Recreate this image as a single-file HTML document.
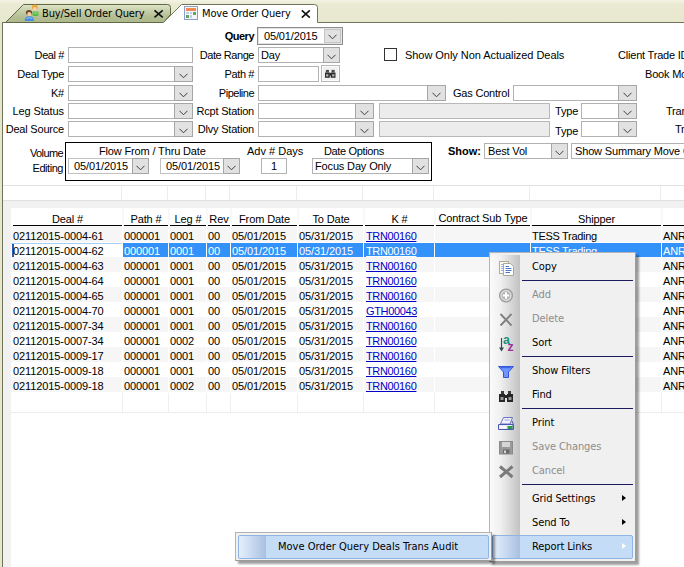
<!DOCTYPE html>
<html>
<head>
<meta charset="utf-8">
<title>Move Order Query</title>
<style>
html,body{margin:0;padding:0;}
body{width:684px;height:567px;overflow:hidden;position:relative;background:#e8e8cf;font-family:"Liberation Sans",Arial,sans-serif;font-size:11px;color:#000;}
.abs{position:absolute;}
#tabbar{position:absolute;left:0;top:0;width:684px;height:23px;background:linear-gradient(#f3f3e6 0,#eaead3 4px,#e8e8cf 100%);}
#panel{position:absolute;left:2px;top:22px;width:690px;height:560px;background:#fff;border:1px solid #70745a;box-sizing:border-box;}
#leftedge{position:absolute;left:0;top:22px;width:2px;height:545px;background:#e6e6cc;}
.lbl{position:absolute;white-space:nowrap;height:14px;line-height:14px;font-size:11px;letter-spacing:-0.2px;}
.r{text-align:right;}
.inp{position:absolute;box-sizing:border-box;border:1px solid #b2b2b2;background:#fff;height:16px;font-size:11px;line-height:14px;padding-left:3px;white-space:nowrap;letter-spacing:-0.15px;}
.dis{background:#ececec;border-color:#b8b8b8;}
.cb{position:absolute;right:-1px;top:-1px;bottom:-1px;width:19px;background:#e1e1e1;border:1px solid #a6a6a6;box-sizing:border-box;}
.cb.n{width:17px;}
.cb svg{position:absolute;left:4px;bottom:2px;}
.cb.n svg{left:3px;}
.tabtxt{position:absolute;top:7px;font-family:"DejaVu Sans Condensed","DejaVu Sans","Liberation Sans",sans-serif;font-size:11px;line-height:14px;white-space:nowrap;letter-spacing:-0.1px;}
.hc{position:absolute;top:208px;height:17px;line-height:22px;text-align:center;border-bottom:1px solid #000;font-size:11px;white-space:nowrap;background:#fff;box-sizing:content-box;box-shadow:0 1px 0 #8a8a8a;letter-spacing:-0.1px;}
.row{position:absolute;left:12px;width:680px;height:15px;}
.alt{box-shadow:-1px 0 0 #f6f6f6;}
.row span{position:absolute;top:0;height:15px;line-height:18px;font-size:11px;white-space:nowrap;letter-spacing:-0.1px;}
.alt{background:#f6f6f6;}
.sel{background:#3392fa;color:#fff;height:14px !important;margin-top:1px;}
.sel span{top:-1px;}
.sel i{position:absolute;display:block;}
.lnk{color:#0000c8;text-decoration:underline;letter-spacing:-0.35px !important;}
.vl{position:absolute;width:1px;background:#e6e6e6;}
.hl{position:absolute;height:1px;background:#e2e2e2;left:11px;width:680px;}
#menu{position:absolute;left:489px;top:252px;width:147px;height:310px;background:#f0f0f0;border:1px solid #b4b4b4;border-right-color:#9c9c9c;border-bottom-color:#9c9c9c;box-sizing:border-box;box-shadow:3px 3px 2px rgba(0,0,0,0.38);}
#menu .gut{position:absolute;left:0;top:2px;width:30px;bottom:2px;background:linear-gradient(90deg,#fbfbfb,#f0f0f0 35%,#c2c2c2);}
.mi{position:absolute;left:42px;height:16px;line-height:16px;font-size:11px;white-space:nowrap;font-family:"DejaVu Sans Condensed","DejaVu Sans","Liberation Sans",sans-serif;letter-spacing:-0.1px;}
.mi.d{color:#8d8d8d;}
.sep{position:absolute;left:32px;width:111px;height:1px;background:#1b1b5c;}
.arr{position:absolute;left:132px;width:0;height:0;border-left:4px solid #000;border-top:3.500px solid transparent;border-bottom:3.500px solid transparent;margin-top:1px;}
#sub{position:absolute;left:235px;top:532px;width:257px;height:29px;background:#f0f0f0;border:1px solid #b4b4b4;border-right-color:#9c9c9c;border-bottom-color:#9c9c9c;box-sizing:border-box;box-shadow:3px 3px 2px rgba(0,0,0,0.38);}
.ic{position:absolute;}
</style>
</head>
<body>
<div id="tabbar"></div>
<div id="leftedge"></div>
<div id="panel"></div>
<svg class="abs" style="left:0;top:0" width="684" height="24" viewBox="0 0 684 24">
  <defs>
    <linearGradient id="tg" x1="0" y1="0" x2="0" y2="1">
      <stop offset="0" stop-color="#e0e5ca"/>
      <stop offset="0.35" stop-color="#c6cfaa"/>
      <stop offset="0.7" stop-color="#b3be93"/>
      <stop offset="1" stop-color="#adb88c"/>
    </linearGradient>
  </defs>
  <path d="M5.500 22.500 L23.500 4.500 L167.500 4.500 Q170.500 4.500 170.500 7.500 L170.500 14.500 L163.500 22.500 Z" fill="url(#tg)" stroke="#626846" stroke-width="1"/>
  <path d="M163.500 22.500 L181.500 4.500 L314.500 4.500 Q317.500 4.500 317.500 7.500 L317.500 22.500 L684 22.500 L684 24 L163.500 24 Z" fill="#fff" stroke="none"/>
  <path d="M163.500 22.500 L181.500 4.500 L314.500 4.500 Q317.500 4.500 317.500 7.500 L317.500 22.500 L684 22.500" fill="none" stroke="#70745a" stroke-width="1"/>
  <g>
    <ellipse cx="34.800" cy="7.200" rx="3" ry="2.700" fill="#f0a73a"/>
    <circle cx="34.800" cy="9" r="2" fill="#f9cfae"/>
    <rect x="32.500" y="11.500" width="6" height="4.500" rx="1.200" fill="#56bb45"/>
    <rect x="33.500" y="12.500" width="4" height="1.200" fill="#8fdc7c"/>
    <ellipse cx="29" cy="12.500" rx="3.100" ry="2.600" fill="#6e4424"/>
    <circle cx="29.300" cy="14" r="2.100" fill="#f8cba6"/>
    <path d="M24.800 21 Q24.500 16.200 29.300 16.200 Q34.200 16.200 34 21 Z" fill="#3f8de6"/>
    <path d="M26.500 18.500 Q29.300 17 32.300 18.500" stroke="#9cc6f6" stroke-width="1" fill="none"/>
  </g>
  <g>
    <rect x="184.500" y="6.500" width="13" height="13" fill="#f4f6fb" stroke="#8aa0c8"/>
    <rect x="186" y="8" width="10" height="3" fill="#f08a50"/>
    <rect x="186" y="12" width="3" height="2" fill="#bcd0ea"/>
    <rect x="190" y="12" width="2" height="2" fill="#bcd0ea"/>
    <rect x="193" y="12" width="3" height="3" fill="#52b052"/>
    <rect x="186" y="15" width="3" height="3" fill="#6aa06a"/>
    <rect x="190" y="15" width="2" height="3" fill="#bcd0ea"/>
  </g>
  <path d="M154.500 10.300 L162.700 17.400 M162.700 10.300 L154.500 17.400" stroke="#111" stroke-width="1.600" fill="none"/>
  <path d="M301.800 10.300 L309.800 17.700 M309.800 10.300 L301.800 17.700" stroke="#111" stroke-width="1.600" fill="none"/>
</svg>
<div class="tabtxt" style="left:42px;">Buy/Sell Order Query</div>
<div class="tabtxt" style="left:202px;letter-spacing:-0.15px;">Move Order Query</div>
<div class="lbl r" style="left:194px;width:60px;top:29px;font-weight:bold;letter-spacing:-0.5px;">Query</div>
<div class="lbl r" style="left:0px;width:64px;top:48px;letter-spacing:-0.4px;">Deal #</div>
<div class="lbl r" style="left:0px;width:64px;top:67px;letter-spacing:-0.3px;">Deal Type</div>
<div class="lbl r" style="left:0px;width:64px;top:86px;">K#</div>
<div class="lbl r" style="left:0px;width:64px;top:104px;letter-spacing:-0.1px;">Leg Status</div>
<div class="lbl r" style="left:0px;width:64px;top:122px;">Deal Source</div>
<div class="lbl r" style="left:184px;width:70px;top:48px;letter-spacing:-0.45px;">Date Range</div>
<div class="lbl r" style="left:184px;width:70px;top:67px;letter-spacing:-0.4px;">Path #</div>
<div class="lbl r" style="left:184px;width:70px;top:86px;letter-spacing:-0.5px;">Pipeline</div>
<div class="lbl r" style="left:184px;width:70px;top:104px;">Rcpt Station</div>
<div class="lbl r" style="left:184px;width:70px;top:122px;">Dlvy Station</div>
<div class="lbl" style="left:405px;top:48px;letter-spacing:-0.050px;">Show Only Non Actualized Deals</div>
<div class="lbl" style="left:618px;top:48px;">Client Trade ID</div>
<div class="lbl" style="left:645px;top:67px;">Book Model</div>
<div class="lbl" style="left:453px;top:86px;">Gas Control</div>
<div class="lbl" style="left:555px;top:104px;">Type</div>
<div class="lbl" style="left:555px;top:124px;">Type</div>
<div class="lbl" style="left:666px;top:104px;">Trans</div>
<div class="lbl" style="left:675px;top:122px;">Tr</div>
<div class="inp" style="left:257px;top:27px;width:86px;height:18px;line-height:16px;padding-left:6px;border-color:#8c8c8c;box-shadow:inset 0 0 0 1px #e3e3e3;">05/01/2015<div class="cb n" style="right:1px;top:1px;bottom:1px;width:17px;border-color:#c4c4c4;"><svg width="9" height="6" viewBox="0 0 9 6"><path d="M0.500 0.800 L4.500 4.800 L8.500 0.800" fill="none" stroke="#3c3c3c" stroke-width="1"/></svg></div></div>
<div class="inp" style="left:68px;top:47px;width:125px;height:16px;"></div>
<div class="inp" style="left:258px;top:47px;width:82px;height:16px;padding-left:2px;">Day<div class="cb n"><svg width="9" height="6" viewBox="0 0 9 6"><path d="M0.500 0.800 L4.500 4.800 L8.500 0.800" fill="none" stroke="#3c3c3c" stroke-width="1"/></svg></div></div>
<div class="abs" style="left:384px;top:48px;width:13px;height:13px;box-sizing:border-box;border:1px solid #333;background:#fff;"></div>
<div class="inp" style="left:68px;top:66px;width:125px;height:16px;"><div class="cb"><svg width="9" height="6" viewBox="0 0 9 6"><path d="M0.500 0.800 L4.500 4.800 L8.500 0.800" fill="none" stroke="#3c3c3c" stroke-width="1"/></svg></div></div>
<div class="inp" style="left:258px;top:66px;width:61px;height:16px;"></div>
<div class="abs" style="left:321px;top:65px;width:19px;height:17px;box-sizing:border-box;border:1px solid #b9b9b9;background:#f1f1f1;box-shadow:inset 0 0 0 1px #fbfbfb;">
  <svg class="abs" style="left:3px;top:3px" width="10.500" height="8.800" viewBox="0 0 12 10"><rect x="0" y="4" width="5.500" height="6" fill="#2e2e2e"/><rect x="6.500" y="4" width="5.500" height="6" fill="#2e2e2e"/><rect x="1" y="1" width="3.500" height="3" fill="#4a4a4a"/><rect x="7.500" y="1" width="3.500" height="3" fill="#4a4a4a"/><rect x="5" y="4.500" width="2" height="3" fill="#2e2e2e"/><rect x="1.200" y="6" width="2.600" height="2.500" fill="#b5b5b5"/><rect x="8.200" y="6" width="2.600" height="2.500" fill="#b5b5b5"/></svg>
</div>
<div class="inp" style="left:68px;top:85px;width:125px;height:16px;"><div class="cb"><svg width="9" height="6" viewBox="0 0 9 6"><path d="M0.500 0.800 L4.500 4.800 L8.500 0.800" fill="none" stroke="#3c3c3c" stroke-width="1"/></svg></div></div>
<div class="inp" style="left:258px;top:85px;width:188px;height:16px;"><div class="cb"><svg width="9" height="6" viewBox="0 0 9 6"><path d="M0.500 0.800 L4.500 4.800 L8.500 0.800" fill="none" stroke="#3c3c3c" stroke-width="1"/></svg></div></div>
<div class="inp" style="left:513px;top:85px;width:124px;height:16px;"><div class="cb"><svg width="9" height="6" viewBox="0 0 9 6"><path d="M0.500 0.800 L4.500 4.800 L8.500 0.800" fill="none" stroke="#3c3c3c" stroke-width="1"/></svg></div></div>
<div class="inp" style="left:68px;top:103px;width:125px;height:16px;"><div class="cb"><svg width="9" height="6" viewBox="0 0 9 6"><path d="M0.500 0.800 L4.500 4.800 L8.500 0.800" fill="none" stroke="#3c3c3c" stroke-width="1"/></svg></div></div>
<div class="inp" style="left:258px;top:103px;width:116px;height:16px;"><div class="cb"><svg width="9" height="6" viewBox="0 0 9 6"><path d="M0.500 0.800 L4.500 4.800 L8.500 0.800" fill="none" stroke="#3c3c3c" stroke-width="1"/></svg></div></div>
<div class="inp dis" style="left:379px;top:103px;width:171px;height:16px;"></div>
<div class="inp" style="left:581px;top:103px;width:56px;height:16px;"><div class="cb"><svg width="9" height="6" viewBox="0 0 9 6"><path d="M0.500 0.800 L4.500 4.800 L8.500 0.800" fill="none" stroke="#3c3c3c" stroke-width="1"/></svg></div></div>
<div class="inp" style="left:68px;top:121px;width:125px;height:16px;"><div class="cb"><svg width="9" height="6" viewBox="0 0 9 6"><path d="M0.500 0.800 L4.500 4.800 L8.500 0.800" fill="none" stroke="#3c3c3c" stroke-width="1"/></svg></div></div>
<div class="inp" style="left:258px;top:121px;width:116px;height:16px;"><div class="cb"><svg width="9" height="6" viewBox="0 0 9 6"><path d="M0.500 0.800 L4.500 4.800 L8.500 0.800" fill="none" stroke="#3c3c3c" stroke-width="1"/></svg></div></div>
<div class="inp dis" style="left:379px;top:121px;width:171px;height:16px;"></div>
<div class="inp" style="left:581px;top:121px;width:56px;height:16px;"><div class="cb"><svg width="9" height="6" viewBox="0 0 9 6"><path d="M0.500 0.800 L4.500 4.800 L8.500 0.800" fill="none" stroke="#3c3c3c" stroke-width="1"/></svg></div></div>
<div class="lbl r" style="left:10px;width:53px;top:146px;letter-spacing:-0.6px;">Volume</div>
<div class="lbl r" style="left:10px;width:53px;top:161px;letter-spacing:-0.45px;">Editing</div>
<div class="abs" style="left:65px;top:142px;width:367px;height:39px;box-sizing:border-box;border:1px solid #000;"></div>
<div class="lbl" style="left:99px;top:144px;letter-spacing:-0.150px;">Flow From / Thru Date</div>
<div class="lbl" style="left:247px;top:144px;letter-spacing:0;">Adv # Days</div>
<div class="lbl" style="left:324px;top:144px;letter-spacing:-0.350px;">Date Options</div>
<div class="inp" style="left:68px;top:158px;width:81px;height:16px;padding-left:5px;border-color:#c2c2c2;letter-spacing:-0.100px;">05/01/2015<div class="cb n"><svg width="9" height="6" viewBox="0 0 9 6"><path d="M0.500 0.800 L4.500 4.800 L8.500 0.800" fill="none" stroke="#3c3c3c" stroke-width="1"/></svg></div></div>
<div class="inp" style="left:160px;top:158px;width:80px;height:16px;padding-left:5px;border-color:#c2c2c2;letter-spacing:-0.100px;">05/01/2015<div class="cb n"><svg width="9" height="6" viewBox="0 0 9 6"><path d="M0.500 0.800 L4.500 4.800 L8.500 0.800" fill="none" stroke="#3c3c3c" stroke-width="1"/></svg></div></div>
<div class="inp" style="left:261px;top:158px;width:26px;height:16px;text-align:center;padding:0;">1</div>
<div class="inp" style="left:312px;top:158px;width:117px;height:16px;padding-left:2px;">Focus Day Only<div class="cb n"><svg width="9" height="6" viewBox="0 0 9 6"><path d="M0.500 0.800 L4.500 4.800 L8.500 0.800" fill="none" stroke="#3c3c3c" stroke-width="1"/></svg></div></div>
<div class="lbl" style="left:448px;top:144px;font-weight:bold;letter-spacing:0;">Show:</div>
<div class="inp" style="left:484px;top:143px;width:84px;height:16px;">Best Vol<div class="cb n"><svg width="9" height="6" viewBox="0 0 9 6"><path d="M0.500 0.800 L4.500 4.800 L8.500 0.800" fill="none" stroke="#3c3c3c" stroke-width="1"/></svg></div></div>
<div class="inp" style="left:571px;top:143px;width:130px;height:16px;">Show Summary Move Only</div>
<div class="hl" style="top:185px;left:3px;width:690px;"></div>
<div class="vl" style="left:121px;top:186px;height:14px;background:#ececec;"></div>
<div class="vl" style="left:167px;top:186px;height:14px;background:#ececec;"></div>
<div class="vl" style="left:205px;top:186px;height:14px;background:#ececec;"></div>
<div class="vl" style="left:229px;top:186px;height:14px;background:#ececec;"></div>
<div class="vl" style="left:296px;top:186px;height:14px;background:#ececec;"></div>
<div class="vl" style="left:362px;top:186px;height:14px;background:#ececec;"></div>
<div class="vl" style="left:433px;top:186px;height:14px;background:#ececec;"></div>
<div class="vl" style="left:529px;top:186px;height:14px;background:#ececec;"></div>
<div class="vl" style="left:660px;top:186px;height:14px;background:#ececec;"></div>
<div class="abs" style="left:3px;top:200px;width:690px;height:28px;background:#f1f1f1;border-top:1px solid #e0e0e0;box-sizing:border-box;"></div>
<div class="abs" style="left:3px;top:201px;width:8px;height:366px;background:#f1f1f1;"></div>
<div class="abs" style="left:11px;top:208px;width:680px;height:18px;background:#f8f8f8;"></div>
<div class="abs" style="left:11px;top:208px;width:3px;height:20px;background:#fff;"></div>
<div class="hc" style="left:13px;width:109px;">Deal #</div>
<div class="hc" style="left:124px;width:44px;">Path #</div>
<div class="hc" style="left:170px;width:36px;">Leg #</div>
<div class="hc" style="left:208px;width:22px;">Rev</div>
<div class="hc" style="left:232px;width:65px;">From Date</div>
<div class="hc" style="left:299px;width:64px;">To Date</div>
<div class="hc" style="left:365px;width:69px;">K #</div>
<div class="hc" style="left:436px;width:94px;line-height:20px;">Contract Sub Type</div>
<div class="hc" style="left:532px;width:129px;">Shipper</div>
<div class="hc" style="left:663px;width:97px;">&nbsp;</div>
<div class="abs" style="left:11px;top:226px;width:680px;height:167px;background:#fff;"></div>
<div class="abs" style="left:11px;top:226px;width:680px;height:2px;background:#f6f6f6;"></div>
<div class="row alt" style="top:227px;"><span style="left:1px;">02112015-0004-61</span><span style="left:112px;">000001</span><span style="left:158px;">0001</span><span style="left:196px;">00</span><span style="left:220px;">05/01/2015</span><span style="left:287px;">05/31/2015</span><span class="lnk" style="left:354px;">TRN00160</span><span style="left:520px;letter-spacing:-0.3px;">TESS Trading</span><span style="left:651px;">ANR</span></div>
<div class="row sel" style="top:242px;"><i style="left:-1px;top:0;width:111px;height:14px;background:#fff;border-top:1px solid #a8cef5;box-sizing:border-box;"></i><i style="left:0;top:1px;width:2px;height:13px;background:#2a5db0;"></i><span style="left:1px;color:#000;">02112015-0004-62</span><span style="left:112px;">000001</span><span style="left:158px;">0001</span><span style="left:196px;">00</span><span style="left:220px;">05/01/2015</span><span style="left:287px;">05/31/2015</span><span class="lnk" style="left:354px;color:#fff;">TRN00160</span><span style="left:520px;letter-spacing:-0.3px;">TESS Trading</span><span style="left:651px;">ANR</span></div>
<div class="row alt" style="top:257px;"><span style="left:1px;">02112015-0004-63</span><span style="left:112px;">000001</span><span style="left:158px;">0001</span><span style="left:196px;">00</span><span style="left:220px;">05/01/2015</span><span style="left:287px;">05/31/2015</span><span class="lnk" style="left:354px;">TRN00160</span><span style="left:651px;">ANR</span></div>
<div class="row" style="top:272px;"><span style="left:1px;">02112015-0004-64</span><span style="left:112px;">000001</span><span style="left:158px;">0001</span><span style="left:196px;">00</span><span style="left:220px;">05/01/2015</span><span style="left:287px;">05/31/2015</span><span class="lnk" style="left:354px;">TRN00160</span><span style="left:651px;">ANR</span></div>
<div class="row alt" style="top:287px;"><span style="left:1px;">02112015-0004-65</span><span style="left:112px;">000001</span><span style="left:158px;">0001</span><span style="left:196px;">00</span><span style="left:220px;">05/01/2015</span><span style="left:287px;">05/31/2015</span><span class="lnk" style="left:354px;">TRN00160</span><span style="left:651px;">ANR</span></div>
<div class="row" style="top:302px;"><span style="left:1px;">02112015-0004-70</span><span style="left:112px;">000001</span><span style="left:158px;">0001</span><span style="left:196px;">00</span><span style="left:220px;">05/01/2015</span><span style="left:287px;">05/31/2015</span><span class="lnk" style="left:354px;">GTH00043</span><span style="left:651px;">ANR</span></div>
<div class="row alt" style="top:317px;"><span style="left:1px;">02112015-0007-34</span><span style="left:112px;">000001</span><span style="left:158px;">0001</span><span style="left:196px;">00</span><span style="left:220px;">05/01/2015</span><span style="left:287px;">05/31/2015</span><span class="lnk" style="left:354px;">TRN00160</span><span style="left:651px;">ANR</span></div>
<div class="row" style="top:332px;"><span style="left:1px;">02112015-0007-34</span><span style="left:112px;">000001</span><span style="left:158px;">0002</span><span style="left:196px;">00</span><span style="left:220px;">05/01/2015</span><span style="left:287px;">05/31/2015</span><span class="lnk" style="left:354px;">TRN00160</span><span style="left:651px;">ANR</span></div>
<div class="row alt" style="top:347px;"><span style="left:1px;">02112015-0009-17</span><span style="left:112px;">000001</span><span style="left:158px;">0001</span><span style="left:196px;">00</span><span style="left:220px;">05/01/2015</span><span style="left:287px;">05/31/2015</span><span class="lnk" style="left:354px;">TRN00160</span><span style="left:651px;">ANR</span></div>
<div class="row" style="top:362px;"><span style="left:1px;">02112015-0009-18</span><span style="left:112px;">000001</span><span style="left:158px;">0001</span><span style="left:196px;">00</span><span style="left:220px;">05/01/2015</span><span style="left:287px;">05/31/2015</span><span class="lnk" style="left:354px;">TRN00160</span><span style="left:651px;">ANR</span></div>
<div class="row alt" style="top:377px;"><span style="left:1px;">02112015-0009-18</span><span style="left:112px;">000001</span><span style="left:158px;">0002</span><span style="left:196px;">00</span><span style="left:220px;">05/01/2015</span><span style="left:287px;">05/31/2015</span><span class="lnk" style="left:354px;">TRN00160</span><span style="left:651px;">ANR</span></div>
<div class="vl" style="left:122px;top:226px;height:167px;background:#fff;"></div>
<div class="vl" style="left:168px;top:226px;height:167px;background:#fff;"></div>
<div class="vl" style="left:206px;top:226px;height:167px;background:#fff;"></div>
<div class="vl" style="left:230px;top:226px;height:167px;background:#fff;"></div>
<div class="vl" style="left:297px;top:226px;height:167px;background:#fff;"></div>
<div class="vl" style="left:363px;top:226px;height:167px;background:#fff;"></div>
<div class="vl" style="left:434px;top:226px;height:167px;background:#fff;"></div>
<div class="vl" style="left:530px;top:226px;height:167px;background:#fff;"></div>
<div class="vl" style="left:661px;top:226px;height:167px;background:#fff;"></div>
<div class="hl" style="top:412px;background:#ececec;"></div>
<div class="vl" style="left:122px;top:393px;height:19px;background:#efefef;"></div>
<div class="vl" style="left:168px;top:393px;height:19px;background:#efefef;"></div>
<div class="vl" style="left:206px;top:393px;height:19px;background:#efefef;"></div>
<div class="vl" style="left:230px;top:393px;height:19px;background:#efefef;"></div>
<div class="vl" style="left:297px;top:393px;height:19px;background:#efefef;"></div>
<div class="vl" style="left:363px;top:393px;height:19px;background:#efefef;"></div>
<div class="vl" style="left:434px;top:393px;height:19px;background:#efefef;"></div>
<div class="vl" style="left:530px;top:393px;height:19px;background:#efefef;"></div>
<div class="vl" style="left:661px;top:393px;height:19px;background:#efefef;"></div>
<div id="menu">
<div class="gut"></div>
<div class="sep" style="top:27px;"></div>
<div class="sep" style="top:103px;"></div>
<div class="sep" style="top:155px;"></div>
<div class="sep" style="top:231px;"></div>
<div class="mi" style="top:6px;">Copy</div>
<div class="mi d" style="top:34px;">Add</div>
<div class="mi d" style="top:58px;">Delete</div>
<div class="mi" style="top:82px;">Sort</div>
<div class="mi" style="top:110px;">Show Filters</div>
<div class="mi" style="top:134px;">Find</div>
<div class="mi" style="top:162px;">Print</div>
<div class="mi d" style="top:186px;">Save Changes</div>
<div class="mi d" style="top:210px;">Cancel</div>
<div class="mi" style="top:238px;">Grid Settings</div>
<div class="mi" style="top:262px;">Send To</div>
<div class="arr" style="top:241px;"></div>
<div class="arr" style="top:265px;"></div>
<div class="abs" style="left:2px;top:282px;width:141px;height:24px;box-sizing:border-box;border:1px solid #8eb4e6;border-radius:2px;background:linear-gradient(90deg,#e4eefb 0,#d3e2f6 8px,#a9c0e0 27px,#c4dcf6 27.500px,#c4dcf6 100%);"></div>
<div class="mi" style="top:286px;">Report Links</div>
<div class="arr" style="top:289px;border-left-color:#fff;"></div>
</div>
<div id="sub">
  <div class="abs" style="left:2px;top:2px;width:251px;height:24px;box-sizing:border-box;border:1px solid #8eb4e6;border-radius:2px;background:linear-gradient(90deg,#e4eefb 0,#d3e2f6 8px,#a9c0e0 27px,#c4dcf6 27.500px,#c4dcf6 100%);"></div>
  <div class="mi" style="top:6px;letter-spacing:0;">Move Order Query Deals Trans Audit</div>
</div>
<svg class="abs" style="left:490px;top:253px" width="30" height="308" viewBox="490 253 30 308">
  <!-- copy -->
  <g>
    <rect x="499.500" y="261.500" width="9" height="12" fill="#fbfaf4" stroke="#b3ab94"/>
    <path d="M501 264.500 H504 M501 266.500 H504 M501 268.500 H504 M501 270.500 H504" stroke="#9fb4d8" stroke-width="1"/>
    <path d="M503.500 263.500 H510.500 L513.500 266.500 V275.500 H503.500 Z" fill="#ffffff" stroke="#a9a79a"/>
    <path d="M505.500 266.500 H509 M505.500 268.500 H511.500 M505.500 270.500 H511.500 M505.500 272.500 H510" stroke="#4a78c8" stroke-width="1"/>
  </g>
  <!-- add -->
  <g>
    <circle cx="506" cy="295.500" r="6.400" fill="#dcdcdc" stroke="#9a9a9a" stroke-width="1.300"/>
    <circle cx="506" cy="295.500" r="4.300" fill="#b4b4b4"/>
    <path d="M506 292.300 V298.700 M502.800 295.500 H509.200" stroke="#ffffff" stroke-width="2"/>
  </g>
  <!-- delete -->
  <path d="M500.500 314 L511.500 325.500 M511.500 314 L500.500 325.500" stroke="#808080" stroke-width="1.900" fill="none"/>
  <!-- sort -->
  <g>
    <path d="M501.500 338 V350.500" stroke="#2f4f4f" stroke-width="1.200"/>
    <path d="M499 347.500 L501.500 351.500 L504 347.500 Z" fill="#2f4f4f"/>
    <text x="503" y="343.800" font-family="Liberation Sans, sans-serif" font-weight="bold" font-size="12.300" fill="#17917e">a</text>
    <text x="507.500" y="351.300" font-family="Liberation Sans, sans-serif" font-weight="bold" font-size="12.300" fill="#9c2f9c">z</text>
  </g>
  <!-- filter -->
  <g>
    <path d="M498.500 366.500 H513.500 L508.500 372 V377.500 H503.500 V372 Z" fill="#6f96ff" stroke="#3355d8" stroke-width="1" stroke-linejoin="round"/>
    <path d="M500.500 367.500 H511.500" stroke="#3f66ea" stroke-width="1.400"/>
  </g>
  <!-- find (binoculars) -->
  <g>
    <rect x="501" y="391" width="3" height="3" fill="#3a3a3a"/>
    <rect x="508" y="391" width="3" height="3" fill="#3a3a3a"/>
    <rect x="499" y="394" width="6" height="8" fill="#262626"/>
    <rect x="507" y="394" width="6" height="8" fill="#262626"/>
    <rect x="505" y="395" width="2" height="3" fill="#262626"/>
    <rect x="500.500" y="397" width="3" height="3" fill="#9a9a9a"/>
    <rect x="508.500" y="397" width="3" height="3" fill="#9a9a9a"/>
  </g>
  <!-- print -->
  <g>
    <path d="M503.500 417.500 H512.500 L510 424 H500.500 Z" fill="#f1f0fb" stroke="#6a74c4" stroke-width="1"/>
    <path d="M504.500 420 H509.500" stroke="#9aa2d8" stroke-width="1"/>
    <path d="M498.500 424.500 H513 V429.500 H498.500 Z" fill="#e8ecfa" stroke="#4a58b0" stroke-width="1"/>
    <path d="M512 421 L513.500 424.500 V429.500" fill="none" stroke="#4a58b0" stroke-width="1"/>
    <rect x="507.500" y="426" width="5" height="3" fill="#2f9a4a"/>
    <rect x="500" y="426.500" width="6" height="1.500" fill="#ffffff"/>
  </g>
  <!-- save -->
  <g>
    <rect x="499.500" y="441.500" width="13" height="12.500" fill="#9a9a9a" stroke="#8a8a8a"/>
    <rect x="502" y="442" width="8" height="5" fill="#d6d6d6"/>
    <rect x="503" y="449.500" width="6.500" height="4" fill="#6a6a6a"/>
    <rect x="504" y="450.500" width="2" height="2.500" fill="#d8d8d8"/>
  </g>
  <!-- cancel -->
  <path d="M500 466.500 L512.500 477 M512.500 466.500 L500 477" stroke="#7a7a7a" stroke-width="3" fill="none"/>
</svg>
</body>
</html>
